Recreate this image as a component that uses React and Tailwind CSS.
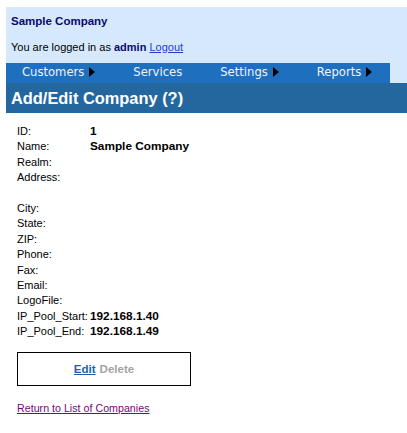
import React from "react";

const Arrow = () => (
  <svg width="6" height="10" viewBox="0 0 6 10" className="inline-block ml-[5px] -mt-[2px]">
    <path d="M0 0 L6 5 L0 10 Z" fill="#000" />
  </svg>
);

const rows = [
  ["ID:", "1"],
  ["Name:", "Sample Company"],
  ["Realm:", ""],
  ["Address:", ""],
  ["", ""],
  ["City:", ""],
  ["State:", ""],
  ["ZIP:", ""],
  ["Phone:", ""],
  ["Fax:", ""],
  ["Email:", ""],
  ["LogoFile:", ""],
  ["IP_Pool_Start:", "192.168.1.40"],
  ["IP_Pool_End:", "192.168.1.49"],
];

export default function App() {
  return (
    <div className="w-[407px] h-[433px] bg-white pt-[7px] pl-[6px] text-black" style={{ fontFamily: '"Liberation Sans", Arial, sans-serif' }}>
      <div className="bg-[#d6e8fb]">
        <div className="h-[56px] pl-[5px] pt-[7px] text-[11px]">
          <div className="font-bold text-[#0a0a6e] text-[11.5px] leading-[14px]">Sample Company</div>
          <div className="mt-[12px] leading-[14px]">
            You are logged in as <span className="font-bold text-[#0a0a6e]">admin</span>{" "}
            <a href="#" className="text-[#1c3fd0] underline">Logout</a>
          </div>
        </div>
        <div
          className="w-[384px] h-[20px] bg-[#1f6fbf] flex items-center pl-4 gap-[38px] text-[11.6px] text-[#eef3fb]"
          style={{ fontFamily: '"DejaVu Sans", Verdana, sans-serif' }}
        >
          <span>Customers<Arrow /></span>
          <span>Services</span>
          <span>Settings<Arrow /></span>
          <span>Reports<Arrow /></span>
        </div>
      </div>
      <div className="h-[30px] bg-[#24679f] pl-[5px] flex items-center text-white font-bold text-[16.4px]">
        Add/Edit Company (?)
      </div>
      <div className="pl-[11px] pt-[11px] text-[11px]">
        <div className="grid grid-cols-[73px_1fr] leading-[15.4px]">
          {rows.map(([label, value], i) => (
            <React.Fragment key={i}>
              <div className="h-[15.4px]">{label}</div>
              <div className="font-bold text-[11.8px] h-[15.4px]">{value}</div>
            </React.Fragment>
          ))}
        </div>
        <div className="mt-[13px] w-[174px] h-[34px] border border-black flex items-center justify-center font-bold text-[11.5px]">
          <a href="#" className="text-[#1c5fae] underline">Edit</a>
          <span className="text-[#a3a3a3] ml-[4px]">Delete</span>
        </div>
        <div className="mt-[14px]">
          <a href="#" className="text-[#800080] underline text-[10.7px]">Return to List of Companies</a>
        </div>
      </div>
    </div>
  );
}
